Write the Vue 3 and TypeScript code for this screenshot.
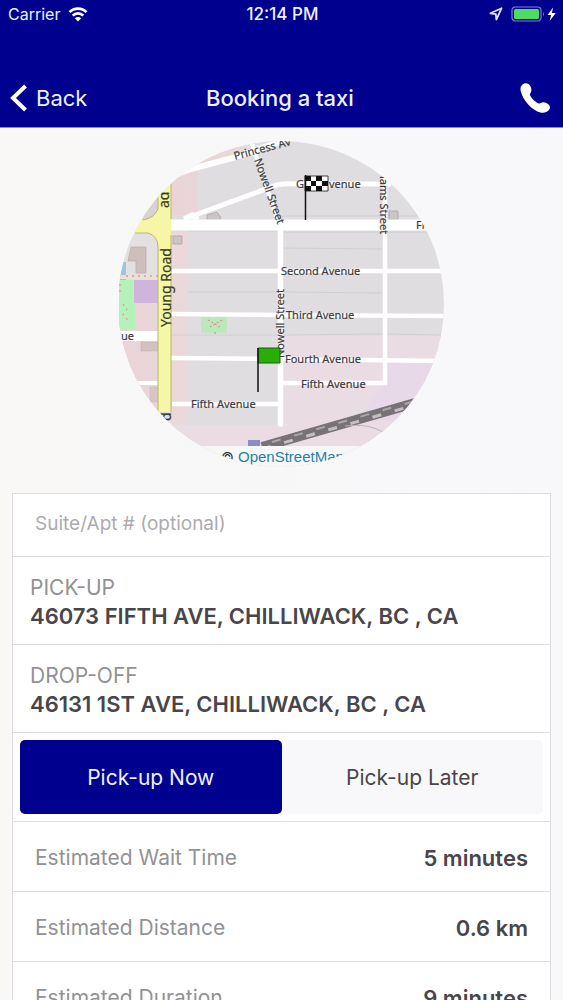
<script setup lang="ts">
import { ref } from 'vue'

interface Stop {
  label: string
  address: string
}

interface Estimate {
  label: string
  value: string
}

const suite = ref('')
const when = ref<'now' | 'later'>('now')

const stops: Stop[] = [
  { label: 'PICK-UP', address: '46073 FIFTH AVE, CHILLIWACK, BC , CA' },
  { label: 'DROP-OFF', address: '46131 1ST AVE, CHILLIWACK, BC , CA' },
]

const estimates: Estimate[] = [
  { label: 'Estimated Wait Time', value: '5 minutes' },
  { label: 'Estimated Distance', value: '0.6 km' },
  { label: 'Estimated Duration', value: '9 minutes' },
]
</script>

<template>
  <div class="screen">
    <header class="top">
      <div class="status">
        <div class="carrier">
          <span>Carrier</span>
          <svg width="20" height="15" viewBox="0 0 20 15" aria-hidden="true">
            <g fill="none" stroke="#fff" stroke-width="2.6">
              <path d="M1.5 5.2a12 12 0 0 1 17 0" />
              <path d="M4.7 8.6a7.5 7.5 0 0 1 10.6 0" />
            </g>
            <path d="M10 14.5 6.9 11.3a4.4 4.4 0 0 1 6.2 0z" fill="#fff" />
          </svg>
        </div>
        <span class="clock">12:14 PM</span>
        <div class="power">
          <svg width="14" height="14" viewBox="0 0 14 14" aria-hidden="true">
            <path d="M12.6 1.200 1.400 6.300l5.400.9.6 5.400z" fill="none" stroke="#dfe2ff" stroke-width="1.800" stroke-linejoin="round" />
          </svg>
          <svg width="46" height="18" viewBox="0 0 46 18" aria-hidden="true">
            <rect x="1" y="2" width="29" height="14" rx="3.5" fill="none" stroke="#7f83cf" stroke-width="1.2" />
            <rect x="3" y="4" width="25" height="10" rx="1.500" fill="#4cdc62" />
            <path d="M32 7q2 2 0 4z" fill="#7f83cf" />
            <path d="M42 2.500 36.500 10h3.600l-1.500 6 6.200-8h-3.900z" fill="#fff" />
          </svg>
        </div>
      </div>
      <nav class="bar">
        <button class="back" type="button">
          <svg width="18" height="28" viewBox="0 0 18 28" aria-hidden="true">
            <path d="M15.500 2 3 14l12.500 12" fill="none" stroke="#fff" stroke-width="4" />
          </svg>
          <span>Back</span>
        </button>
        <h1>Booking a taxi</h1>
        <button class="call" type="button" aria-label="Call">
          <svg width="30" height="32" viewBox="0 0 30 32" aria-hidden="true">
            <path d="M2 3C4 .6 8.200.6 10 3.600c1.700 2.900 2 5.400.4 7.600-.9 1.300-.5 2.300.5 3.600 1.700 2.300 3.500 4.100 5.800 5.800 1.500 1.100 2.600 1.200 3.900.4 2.500-1.500 5.200-.8 7.700 1.300 2.100 1.800 2.100 4.100.4 6-2.700 2.900-7.600 3.100-12.300.6C9.200 25 3.200 17.700 1 10 .1 7 .4 4.800 2 3z" fill="#fff" />
          </svg>
        </button>
      </nav>
    </header>

    <main class="content">
      <div class="map">
        <svg viewBox="119 141 326 326" role="img" aria-label="Route map">
          <defs>
            <clipPath id="disc"><circle cx="281" cy="304" r="163" /></clipPath>
            <linearGradient id="verge" x1="0" x2="1">
              <stop offset="0" stop-color="#e9d3d6" />
              <stop offset="1" stop-color="#ead9db" />
            </linearGradient>
          </defs>
          <g clip-path="url(#disc)">
            <rect x="118" y="141" width="326" height="326" fill="#dfdddf" />
            <path d="M171 141h80l-53 30v44h-27z" fill="url(#verge)" />
            <path d="M171 231h17v194h-17zM118 300h41v130h-41z" fill="url(#verge)" />
            <path d="M283 336h161v130H171v-41h109v-50h3z" fill="#e9dce3" />
            <path d="M388 361h56v60h-90q26-25 34-60z" fill="#e8d9e8" />
            <path d="M118 234h32q8 3 8 12v34h-40z" fill="#e3e0e1" />
            <path d="M118 185h40v24q-4 9-15 11h-25z" fill="#d8d2d2" />
            <path d="M131 247h15v26h-10v-12h-8z" fill="#cfbfbc" stroke="#b9a9a7" stroke-width=".7" />
            <path d="M150 387h9v15h-9z" fill="#d9c5c6" stroke="#c4b4b2" stroke-width=".5" />
            <path d="M141 342h17v9h-17z" fill="#d2c1c1" stroke="#bcaead" stroke-width=".5" />
            <path d="M118 262h8v18h-8z" fill="#9cc5df" />
            <path d="M118 280h17v50h-17z" fill="#b5f2b9" />
            <path d="M134 280h25v23h-25z" fill="#cfb5dc" />
            <path d="M118 277h40" stroke="#e8e3d6" stroke-width="4" />
            <path d="M126 276h32M120 284v10m3 10 4 5-4 6 5 5" fill="none" stroke="#dd9a91" stroke-width="1.300" stroke-dasharray="2 4" />
            <path d="M201 317h26v16h-26z" fill="#bce8bd" />
            <path d="m208 320 7 4-7 4m14-8-7 4 6 4m-6 4v2" fill="none" stroke="#d89884" stroke-width="1.300" stroke-dasharray="2 2" />
            <path d="M283 248l99 1M283 292l99 1M188 292h89M171 335h107M283 335l98-1 63 1M282 216h144M188 231h90M283 232h160" fill="none" stroke="#cecbce" stroke-width=".8" />
            <g fill="#cbc5c5" stroke="#aaa5a5" stroke-width=".8">
              <path d="m207 215 10-3 4 6-3 3h-11zM173 236h9v8h-9zM389 211h9v9h-9z" />
            </g>
            <g fill="none" stroke="#fff">
              <path d="M165 180l22-10 46-12 58-20" stroke-width="6" />
              <path d="M187 218l90-33q8-2 20-1h94" stroke-width="5" />
              <path d="M251 141l28 84" stroke-width="4" />
              <path d="M171 225h255" stroke-width="11" />
              <path d="M184 219l8-4 6 5" stroke-width="5" />
              <path d="M171 271h273M171 314l110 1 163 1M171 358l110 1 163 2M172 404h106M281 383h106" stroke-width="4.500" />
              <path d="M280.500 228v196" stroke-width="5.500" stroke-linecap="round" />
              <path d="M385 170v215" stroke-width="4.500" />
              <path d="M118 336h41" stroke-width="10" />
              <path d="M118 383h42" stroke-width="4" />
            </g>
            <path d="M158 170h13v242h-13V246q0-9-8-12l-20-1-12 2v-15h25q12-1 15-10z" fill="#f5f7a6" />
            <path d="M158 175v34q-4 9-15 11M135 233h13q10 3 10 14v165M171 175v44M171 235v177" fill="none" stroke="#b8b66b" stroke-width="1" />
            <path d="M262 447 415 403" stroke="#777276" stroke-width="10" />
            <path d="M262 449 415 405" stroke="#c4bfc3" stroke-width="3" stroke-dasharray="9 14" />
            <path d="M272 442 415 401" stroke="#aca7ab" stroke-width="2" stroke-dasharray="9 14" />
            <path d="M345 426q23-3 38 6" fill="none" stroke="#bdb2b8" stroke-width="1" />
            <path d="M248 440h12v6h-12z" fill="#8d8dbf" />

            <g class="street">
              <text transform="translate(235 160) rotate(-15)">Princess Av</text>
              <text transform="translate(254 160) rotate(70)">Nowell Street</text>
              <text x="296" y="188">G</text>
              <text x="329" y="188">venue</text>
              <text transform="translate(380 176) rotate(90)">iams Street</text>
              <text x="416" y="229">Fi</text>
              <text x="281" y="275">Second Avenue</text>
              <text x="286" y="319">Third Avenue</text>
              <text x="285" y="363">Fourth Avenue</text>
              <text x="301" y="388">Fifth Avenue</text>
              <text x="191" y="408">Fifth Avenue</text>
              <text x="121" y="340">ue</text>
              <text transform="translate(284 358) rotate(-90)">Nowell Street</text>
              <g class="major">
                <text transform="translate(171 327) rotate(-90)">Young Road</text>
                <text transform="translate(169 208) rotate(-90)">ad</text>
                <text transform="translate(171 421) rotate(-90)">d</text>
              </g>
            </g>

            <path d="M305 176h23v15h-23z" fill="#fff" stroke="#111" stroke-width=".8" />
            <path d="M305 176h6v5h5v-5h6v5h6v5h-6v5h-6v-5h-5v5h-6v-5h6v-5h-6zM316 181v5h6v-5z" fill="#111" fill-rule="evenodd" />
            <path d="M305.500 175v45" stroke="#111" stroke-width="1.500" />
            <path d="M258 348h22v15h-22z" fill="#2bad08" stroke="#17640a" stroke-width="1" />
            <path d="M258 348v44" stroke="#111" stroke-width="1.500" />

            <path d="M118 446h326v21H118z" fill="#f8f7f8" />
            <text class="copy" x="221" y="463">©</text>
            <a href="#openstreetmap"><text class="credit" x="238" y="462">OpenStreetMap</text></a>
          </g>
        </svg>
      </div>

      <section class="card">
        <div class="suite">
          <input v-model="suite" type="text" placeholder="Suite/Apt # (optional)" aria-label="Suite/Apt # (optional)" />
        </div>
        <div v-for="stop in stops" :key="stop.label" class="stop">
          <span class="muted">{{ stop.label }}</span>
          <strong>{{ stop.address }}</strong>
        </div>
        <div class="choice">
          <button type="button" :class="{ on: when === 'now' }" :aria-pressed="when === 'now'" @click="when = 'now'">Pick-up Now</button>
          <button type="button" :class="{ on: when === 'later' }" :aria-pressed="when === 'later'" @click="when = 'later'">Pick-up Later</button>
        </div>
        <div v-for="row in estimates" :key="row.label" class="estimate">
          <span class="muted">{{ row.label }}</span>
          <strong>{{ row.value }}</strong>
        </div>
      </section>
    </main>
  </div>
</template>

<style>
body {
  margin: 0;
  background: #f8f7f9;
}
</style>

<style scoped>
.screen {
  display: flex;
  flex-direction: column;
  height: 100vh;
  overflow: hidden;
  background: linear-gradient(90deg, #f9f8f7, #f8f7fa);
  color: #48464a;
  font-family: Inter, Roboto, "Liberation Sans", sans-serif;
  font-size: 21px;
  line-height: 28px;
}

.top {
  flex: none;
  background: #00008f;
  color: #eef0ff;
  border-bottom: 1px solid #8888c8;
}

.status,
.bar {
  display: grid;
  grid-template-columns: 1fr auto 1fr;
  align-items: center;
}

.status {
  height: 28px;
  padding: 0 6px 0 8px;
  font-size: 16px;
}

.carrier,
.power {
  display: flex;
  align-items: center;
  gap: 8px;
}

.power {
  justify-content: flex-end;
}

.clock {
  font-size: 17px;
  font-weight: 500;
}

.bar {
  height: 58px;
  padding: 0 13px 0 10px;
  margin-top: 41px;
}

.bar h1 {
  margin: 0;
  font-size: 22px;
  font-weight: 500;
}

button {
  border: 0;
  padding: 0;
  background: none;
  color: inherit;
  font: inherit;
}

.back {
  display: flex;
  align-items: center;
  gap: 8px;
  justify-self: start;
  font-size: 22px;
}

.call {
  display: flex;
  justify-self: end;
}

.content {
  flex: 1;
  min-height: 0;
  overflow-y: auto;
  scrollbar-width: none;
  padding: 13px 12px 0;
}

.map {
  display: flex;
  justify-content: center;
}

.map svg {
  width: 100%;
  max-width: 326px;
}

.street {
  fill: #3d3b3d;
  stroke: #3d3b3d;
  stroke-width: 0.2px;
  font-family: "Noto Sans", "Open Sans", sans-serif;
  font-size: 11px;
}

.major {
  font-size: 14px;
  fill: #3a3a20;
}

.copy {
  fill: #333;
  font-size: 14px;
}

.credit {
  fill: #1f82a8;
  font-family: "Liberation Sans", sans-serif;
  font-size: 15px;
}

.card {
  margin-top: 26px;
  border: 1px solid #dfdde0;
  background: #fff;
}

.card > * {
  box-sizing: border-box;
  border-bottom: 1px solid #dfdde0;
}

.suite {
  display: flex;
  height: 63px;
  padding: 0 22px;
}

.suite input {
  flex: 1;
  min-width: 0;
  padding: 0 0 2px;
  border: 0;
  outline: 0;
  background: none;
  color: #48464a;
  font: inherit;
  font-size: 19px;
}

.suite input::placeholder {
  color: #adabae;
  opacity: 1;
}

.stop {
  display: flex;
  flex-direction: column;
  padding: 17px;
}

.stop {
  height: 88px;
}

.muted {
  color: #929194;
}

.stop strong,
.estimate strong {
  font-size: 22px;
  font-weight: 600;
}

.choice {
  display: grid;
  grid-template-columns: 1fr 1fr;
  height: 89px;
  padding: 7px;
}

.choice button {
  padding-top: 2px;
  border-radius: 5px;
  background: #f8f7fa;
}

.choice button.on {
  background: #00008f;
  color: #eef0ff;
}

.estimate {
  display: flex;
  align-items: center;
  justify-content: space-between;
  height: 70px;
  padding: 3px 22px 0;
}
</style>
